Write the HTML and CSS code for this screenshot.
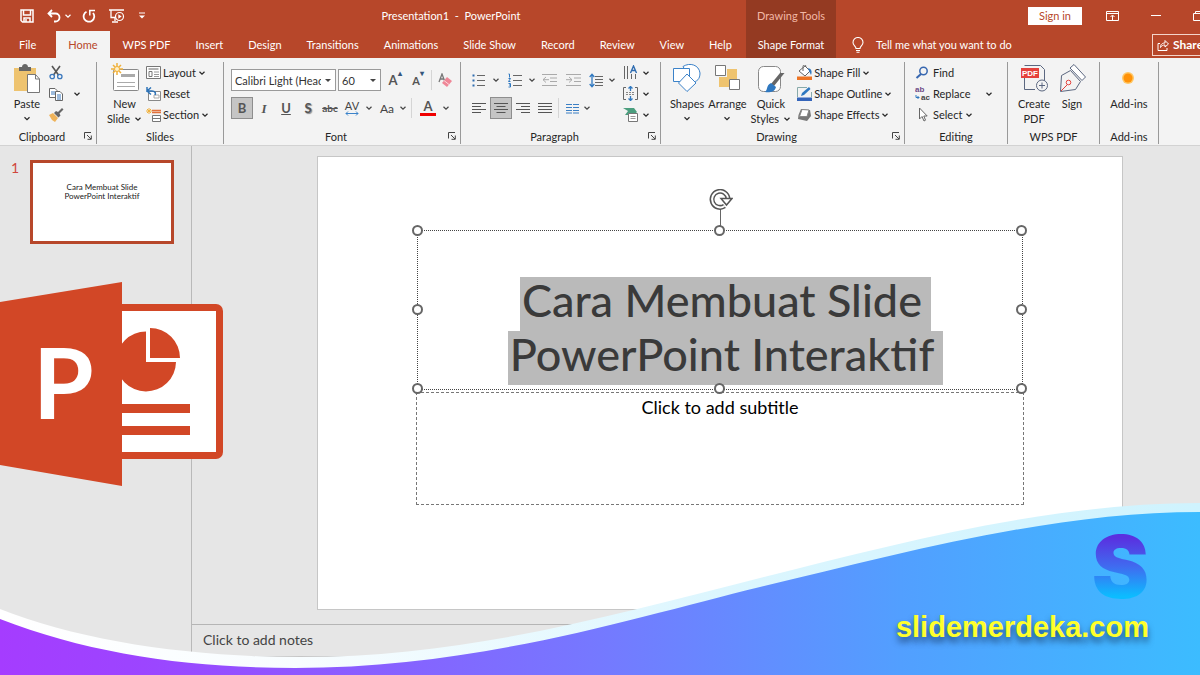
FILE: index.html
```
<!DOCTYPE html>
<html lang="en">
<head>
<meta charset="utf-8">
<title>Presentation1 - PowerPoint</title>
<link rel="stylesheet" href="styles.css">
</head>
<body>
<svg class="defs" aria-hidden="true">
  <symbol id="chev" viewBox="0 0 8 8"><path d="M1.500 2.800 4 5.200 6.500 2.800" fill="none" stroke="currentColor" stroke-width="1.200"/></symbol>
  <symbol id="launch" viewBox="0 0 8 8"><path d="M.5 6.500V.5H7M3 3l4 4M7.300 3.500v3.800H3.500" fill="none" stroke="#444"/></symbol>
</svg>
<div class="app">
  <header class="header">
    <div class="titlebar">
      <div class="qat">
        <button class="bare" aria-label="Save"><svg width="14" height="14" viewBox="0 0 14 14"><path d="M1 1h12v12H2.500L1 11.500zM3.500 1v5h7V1M4 13V9h6v4M6 10v3" fill="none" stroke="#fff" stroke-width="1.500"/></svg></button>
        <button class="bare" aria-label="Undo"><svg width="14" height="14" viewBox="0 0 14 14"><path d="M5 1 1.500 4.500 5 8M2 4.500h6.500a4 4 0 0 1 0 8H7" fill="none" stroke="#fff" stroke-width="1.800"/></svg></button>
        <button class="bare near" aria-label="Undo list"><svg width="8" height="8"><use href="#chev"/></svg></button>
        <button class="bare" aria-label="Repeat"><svg width="14" height="14" viewBox="0 0 14 14"><path d="M4.500 2.700A5.300 5.300 0 1 0 11 4" fill="none" stroke="#fff" stroke-width="1.800"/><path d="M7.800 6.500V1.500H13" fill="none" stroke="#fff" stroke-width="1.500"/></svg></button>
        <button class="bare" aria-label="Start slide show"><svg width="16" height="14" viewBox="0 0 16 14"><path d="M0 1h15M2 1v7.500h4M6 9v3M3 13h6" fill="none" stroke="#fff" stroke-width="1.300"/><circle cx="10.500" cy="7.500" r="4" fill="none" stroke="#fff" stroke-width="1.200"/><path d="M9.300 5.300v4.400l3.400-2.200z" fill="#fff"/></svg></button>
        <button class="bare" aria-label="Customize toolbar"><svg width="8" height="8" viewBox="0 0 8 8"><path d="M1 1h6" stroke="#fff"/><path d="M1 3.500h6L4 6.500z" fill="#fff"/></svg></button>
      </div>
      <h1 class="doc-title">Presentation1&nbsp; -&nbsp; PowerPoint</h1>
    </div>
    <div class="context context-name">Drawing Tools</div>
    <div class="window-tools">
      <button class="signin">Sign in</button>
      <button class="bare" aria-label="Ribbon display options"><svg width="13" height="10" viewBox="0 0 13 10"><path d="M.5.5h12v9H.5zM.5 2.500h12M6.500 9V4.500M4.500 6l2-2 2 2" fill="none" stroke="#fff"/></svg></button>
      <button class="bare" aria-label="Minimize"><svg width="10" height="10" viewBox="0 0 10 10"><path d="M0 4.500h10" stroke="#fff"/></svg></button>
      <button class="bare" aria-label="Restore"><svg width="11" height="10" viewBox="0 0 11 10"><path d="M.5 2.500h7v7h-7zM2.500 2.500v-2h8v7h-3" fill="none" stroke="#fff"/></svg></button>
    </div>
    <nav class="tabs">
      <button class="tab file">File</button><button class="tab active">Home</button><button class="tab">WPS PDF</button><button class="tab">Insert</button><button class="tab">Design</button><button class="tab">Transitions</button><button class="tab">Animations</button><button class="tab">Slide Show</button><button class="tab">Record</button><button class="tab">Review</button><button class="tab">View</button><button class="tab">Help</button>
    </nav>
    <button class="context context-tab">Shape Format</button>
    <div class="tell-row">
      <svg width="12" height="16" viewBox="0 0 12 16"><path d="M4 11.500C4 9 1 8.500 1 5.500a5 5 0 0 1 10 0c0 3-3 3.500-3 6zM4 13.500h4M4.500 15.300h3" fill="none" stroke="#fff" stroke-width="1.100"/></svg>
      <button class="bare tell">Tell me what you want to do</button>
      <button class="share"><svg width="12" height="12" viewBox="0 0 12 12"><path d="M3 4.500H1v7h9V9M3.500 8.500C3.500 5 5.500 4 8 4V1.500L11.500 5 8 8V6C6 6 4.500 6.500 3.500 8.500z" fill="none" stroke="#fff"/></svg>Share</button>
    </div>
  </header>

  <section class="ribbon" aria-label="Ribbon">
    <div class="group">
      <div class="body clipboard">
        <button class="big"><svg width="28" height="32" viewBox="0 0 28 32"><path d="M1 5h22v23H1z" fill="#eec36f"/><path d="M6 4h3c0-4 6-4 6 0h3v4H6z" fill="#666"/><path d="M14.500 11.500h8l4 4.500v13.500h-12z" fill="#fff" stroke="#777"/><path d="M22.500 11.500V16h4" fill="none" stroke="#777"/></svg><span>Paste</span><svg width="8" height="15" viewBox="0 0 8 8"><use href="#chev"/></svg></button>
        <div class="stack">
          <button class="row" aria-label="Cut"><svg width="14" height="15" viewBox="0 0 14 15"><path d="M3 1 9.500 10M11 1 4.500 10" stroke="#555" stroke-width="1.600"/><circle cx="3.200" cy="11.500" r="2.200" fill="none" stroke="#3b78bd" stroke-width="1.300"/><circle cx="10.800" cy="11.500" r="2.200" fill="none" stroke="#3b78bd" stroke-width="1.300"/></svg></button>
          <button class="row wide" aria-label="Copy"><svg width="14" height="14" viewBox="0 0 14 14"><path d="M.5 1.500H6l2 2v7H.5z" fill="#fff" stroke="#666"/><path d="M6.500 4.500H11l2.500 2.500v6.500h-7z" fill="#fff" stroke="#666"/><path d="M2 5h4M2 7h4M8 8h4M8 10h4M8 12h4" stroke="#3b78bd"/></svg><svg width="8" height="8"><use href="#chev"/></svg></button>
          <button class="row" aria-label="Format painter"><svg width="15" height="14" viewBox="0 0 15 14"><path d="m0 7 4-2 5 5-3 4-3-2z" fill="#efb35a"/><path d="m5 5 2-2 2 1 4-4 1.500 1.500-4 4 1 2-2 2z" fill="#666"/></svg></button>
        </div>
      </div>
      <div class="caption"><span>Clipboard</span><button class="bare" aria-label="Clipboard options"><svg width="8" height="8"><use href="#launch"/></svg></button></div>
    </div>

    <div class="group">
      <div class="body slides">
        <button class="big"><svg width="28" height="32" viewBox="0 0 28 32"><rect x="2.500" y="6.500" width="25" height="21" rx="1" fill="#fff" stroke="#888"/><path d="M10 12.500h14" stroke="#aaa" stroke-width="3"/><path d="M6 19.500h18M6 23.500h18" stroke="#aaa"/><path d="M6 0v12M0 6h12M2 2l8 8M10 2l-8 8" stroke="#f0b13c" stroke-width="1.500"/><circle cx="6" cy="6" r="2.500" fill="#fff0c8" stroke="#f0b13c"/></svg><span>New</span><span>Slide <svg width="8" height="8"><use href="#chev"/></svg></span></button>
        <div class="stack">
          <button class="row"><svg width="15" height="14" viewBox="0 0 15 14"><path d="M.5.5h14v12H.5z" fill="#fff" stroke="#777"/><path d="M2.500 3h10" stroke="#999" stroke-width="1.500"/><path d="M3 5.500h3v5H3z" fill="none" stroke="#777"/><path d="M8 6h5M8 8.500h5M8 10.500h5" stroke="#999"/></svg>Layout <svg width="8" height="8"><use href="#chev"/></svg></button>
          <button class="row"><svg width="15" height="14" viewBox="0 0 15 14"><path d="M2.500 4.500h12v9h-12z" fill="#fff" stroke="#888"/><path d="M8 8h5v3H8z" fill="none" stroke="#aaa"/><path d="M5 .5 1 4l4 3.500M1 4h5c3 0 4 2 3 4M1 0v5" fill="none" stroke="#2f74b8" stroke-width="1.500"/></svg>Reset</button>
          <button class="row"><svg width="15" height="14" viewBox="0 0 15 14"><path d="M6 2.500h9M6 4.500h9" stroke="#e2703a" stroke-width="1.300"/><path d="M6.500 7.500h8v6h-8zM6.500 10.500h8" fill="#fff" stroke="#777"/><path d="M3 0v6M0 3h6M1 1l4 4M5 1 1 5" stroke="#f0b13c"/></svg>Section <svg width="8" height="8"><use href="#chev"/></svg></button>
        </div>
      </div>
      <div class="caption"><span>Slides</span></div>
    </div>

    <div class="group">
      <div class="body lines font">
        <div class="line">
          <span class="pick pick-font"><select aria-label="Font"><option>Calibri Light (Headings)</option></select></span>
          <span class="pick pick-size"><select aria-label="Font size"><option>60</option></select></span>
          <button class="ib w24 glyph" aria-label="Increase font size">A<sup class="tri">▴</sup></button>
          <button class="ib w22 glyph small" aria-label="Decrease font size">A<sup class="tri">▾</sup></button>
          <i class="rule slim"></i>
          <button class="ib w22" aria-label="Clear formatting"><svg width="14" height="15" viewBox="0 0 14 15"><path d="M1 9 4 1l3 8M2 6h4" fill="none" stroke="#777" stroke-width="1.300"/><path d="m9 4 5 4-5 6-5-4z" fill="#ef8797"/><path d="m6 7.500 5 4" stroke="#fbd5da"/></svg></button>
        </div>
        <div class="line">
          <button class="ib w22 on glyph" aria-label="Bold">B</button>
          <button class="ib w22 glyph italic" aria-label="Italic">I</button>
          <button class="ib w22 glyph under" aria-label="Underline">U</button>
          <button class="ib w22 glyph shadow" aria-label="Shadow">S</button>
          <button class="ib w22 strike" aria-label="Strikethrough">abc</button>
          <button class="ib w22 spacing" aria-label="Character spacing">AV<svg width="14" height="5" viewBox="0 0 14 5"><path d="M1 2.500h12M3 .5l-2 2 2 2M11 .5l2 2-2 2" fill="none" stroke="#3b82c9"/></svg></button>
          <svg class="c" width="12" height="8" viewBox="0 0 8 8"><use href="#chev"/></svg>
          <button class="ib w24 case" aria-label="Change case">Aa</button>
          <svg class="c" width="8" height="8"><use href="#chev"/></svg>
          <i class="rule"></i>
          <button class="ib w24 glyph" aria-label="Font color"><span class="ink">A</span></button>
          <svg class="c" width="12" height="8" viewBox="0 0 8 8"><use href="#chev"/></svg>
        </div>
      </div>
      <div class="caption"><span>Font</span><button class="bare" aria-label="Font options"><svg width="8" height="8"><use href="#launch"/></svg></button></div>
    </div>

    <div class="group">
      <div class="body paragraph">
        <div class="lines">
          <div class="line">
            <button class="ib w22" aria-label="Bullets"><svg width="14" height="15" viewBox="0 0 14 15"><path d="M5 2.500h8M5 7.500h8M5 12.500h8" stroke="#666"/><path d="M.5 1.500h2v2h-2zM.5 6.500h2v2h-2zM.5 11.500h2v2h-2z" fill="#2f6cb0"/></svg></button>
            <svg class="c" width="12" height="8" viewBox="0 0 8 8"><use href="#chev"/></svg>
            <button class="ib w26" aria-label="Numbering"><svg width="14" height="15" viewBox="0 0 14 15"><path d="M5 2.500h9M5 7.500h9M5 12.500h9" stroke="#666"/><path d="M.5 1h1v3.500M.5 5.500h2l-2 3h2M.5 10.500h2v3.500H.5M1 12h1" fill="none" stroke="#2f78c0"/></svg></button>
            <svg class="c" width="8" height="8"><use href="#chev"/></svg>
            <button class="ib w26" aria-label="Decrease indent"><svg width="15" height="14" viewBox="0 0 15 14"><path d="M0 1.500h15M8 5h7M8 8.500h7M0 12.500h15M1 6.700h6M4 4 1 6.700 4 9.500" fill="none" stroke="#aaa"/></svg></button>
            <button class="ib w22" aria-label="Increase indent"><svg width="15" height="14" viewBox="0 0 15 14"><path d="M0 1.500h15M8 5h7M8 8.500h7M0 12.500h15M0 6.700h6M3 4l3 2.700L3 9.500" fill="none" stroke="#aaa"/></svg></button>
            <button class="ib w24" aria-label="Line spacing"><svg width="14" height="15" viewBox="0 0 14 15"><path d="M6 3.500h8M6 6.500h8M6 9.500h8M6 12.500h8" stroke="#666"/><path d="M3 1v13M.7 4 3 1.200 5.300 4M.7 11 3 13.800 5.300 11" fill="none" stroke="#2f78c0" stroke-width="1.300"/></svg></button>
            <svg class="c" width="8" height="8"><use href="#chev"/></svg>
          </div>
          <div class="line">
            <button class="ib w22" aria-label="Align left"><svg width="14" height="12" viewBox="0 0 14 12"><path d="M0 1.500h14M0 4.500h9M0 7.500h14M0 10.500h9" stroke="#555"/></svg></button>
            <button class="ib w22 on" aria-label="Center"><svg width="14" height="12" viewBox="0 0 14 12"><path d="M0 1.500h14M2.500 4.500h9M0 7.500h14M2.500 10.500h9" stroke="#555"/></svg></button>
            <button class="ib w22" aria-label="Align right"><svg width="14" height="12" viewBox="0 0 14 12"><path d="M0 1.500h14M5 4.500h9M0 7.500h14M5 10.500h9" stroke="#555"/></svg></button>
            <button class="ib w22" aria-label="Justify"><svg width="14" height="12" viewBox="0 0 14 12"><path d="M0 1.500h14M0 4.500h14M0 7.500h14M0 10.500h14" stroke="#555"/></svg></button>
            <i class="rule slim"></i>
            <button class="ib w22" aria-label="Columns"><svg width="13" height="11" viewBox="0 0 13 11"><path d="M0 1.500h6M7 1.500h6M0 4.500h6M7 4.500h6M0 7.500h6M7 7.500h6M0 10h6M7 10h6" stroke="#3b7fc4"/></svg></button>
            <svg class="c" width="8" height="8"><use href="#chev"/></svg>
          </div>
        </div>
        <div class="stack">
          <button class="row" aria-label="Text direction"><svg width="15" height="15" viewBox="0 0 15 15"><path d="M1.500 1v13M4.500 1v13M8.500 9v5M12.500 9v5" stroke="#666"/><path d="M7.500 8 10.500 1l3 7M8.500 5.500h4" fill="none" stroke="#2f6cb0" stroke-width="1.400"/></svg><svg width="8" height="8"><use href="#chev"/></svg></button>
          <button class="row" aria-label="Align text"><svg width="15" height="15" viewBox="0 0 15 15"><path d="M3 1.500H.5v12H3M12 1.500h2.500v12H12" fill="none" stroke="#666"/><path d="M3 6.500h9M3 8.500h9" stroke="#888" stroke-dasharray="2 1"/><path d="M7.500 0v5M5.500 2.500l2-2 2 2M7.500 10v5M5.500 12.500l2 2 2-2" fill="none" stroke="#2f78c0" stroke-width="1.300"/></svg><svg width="8" height="8"><use href="#chev"/></svg></button>
          <button class="row" aria-label="Convert to SmartArt"><svg width="15" height="15" viewBox="0 0 15 15"><path d="M0 1h11l3 4-3 3H2l3-4z" fill="#4b9e7e"/><path d="M5.500 6.500h9v8h-9z" fill="#fff" stroke="#777"/><path d="M7.500 9.500h5M7.500 11.500h5" stroke="#999"/></svg><svg width="8" height="8"><use href="#chev"/></svg></button>
        </div>
      </div>
      <div class="caption"><span>Paragraph</span><button class="bare" aria-label="Paragraph options"><svg width="8" height="8"><use href="#launch"/></svg></button></div>
    </div>

    <div class="group">
      <div class="body drawing">
        <button class="big"><svg width="28" height="32" viewBox="0 0 28 32"><g fill="#fff" stroke="#3b82c9"><path d="M10 3.500C17-1 26 2 27 10c0 6-3 9-8 9z"/><path d="M.5 5.500h16v13H.5z"/></g><path d="m14 11 9 9-9 8.500L5.500 20z" fill="#fff" stroke="#3b82c9"/></svg><span>Shapes</span><svg width="8" height="15" viewBox="0 0 8 8"><use href="#chev"/></svg></button>
        <button class="big"><svg width="28" height="32" viewBox="0 0 28 32"><path d="M14 6h10v10H14zM6 14h10v10H6z" fill="#eec36f"/><path d="M2.500 2.500h10v10h-10zM16.500 16.500h10v10h-10z" fill="#fff" stroke="#777"/></svg><span>Arrange</span><svg width="8" height="15" viewBox="0 0 8 8"><use href="#chev"/></svg></button>
        <button class="big"><svg width="28" height="32" viewBox="0 0 28 32"><rect x="1.500" y="3.500" width="22" height="25" rx="5" fill="#fff" stroke="#888"/><path d="M27.500 10 17 23l-3-2 9-11z" fill="#666"/><path d="m14 20 5 4c-1 5-7 6-11 5 3-2 1-7 6-9z" fill="#2f78c0"/></svg><span>Quick</span><span>Styles <svg width="8" height="8"><use href="#chev"/></svg></span></button>
        <div class="stack">
          <button class="row"><svg width="15" height="15" viewBox="0 0 15 15"><path d="m2 6 6-5 5 5-5 5z" fill="#fff" stroke="#666"/><path d="M6 6V1.500a1.500 1.500 0 0 1 3 0" fill="none" stroke="#666"/><path d="M11 3c4 1 4 4 3 7l-2-4z" fill="#2f78c0"/><path d="M0 11.500h15V15H0z" fill="#ed7424"/></svg>Shape Fill <svg width="8" height="8"><use href="#chev"/></svg></button>
          <button class="row"><svg width="15" height="15" viewBox="0 0 15 15"><path d="M10 1.500H.5V11M14.500 6v5" fill="none" stroke="#8aa"/><path d="m4 10 1-3 7-6 1.500 2L7 9z" fill="#2f78c0"/><path d="M0 11.500h15V15H0z" fill="#3565ba"/></svg>Shape Outline <svg width="8" height="8"><use href="#chev"/></svg></button>
          <button class="row"><svg width="15" height="15" viewBox="0 0 15 15"><path d="m4 2 9 1 1 6-4 5-9-2 .5-4z" fill="#777"/><path d="m5 2.500 7 .5-2 6.500H2.500z" fill="#fff" stroke="#888"/></svg>Shape Effects <svg width="8" height="8"><use href="#chev"/></svg></button>
        </div>
      </div>
      <div class="caption"><span>Drawing</span><button class="bare" aria-label="Drawing options"><svg width="8" height="8"><use href="#launch"/></svg></button></div>
    </div>

    <div class="group">
      <div class="body editing">
        <div class="stack">
          <button class="row"><svg width="15" height="14" viewBox="0 0 15 14"><circle cx="8.500" cy="5" r="3.700" fill="none" stroke="#3767b0" stroke-width="1.500"/><path d="M6 8 1.500 12" stroke="#3767b0" stroke-width="2"/></svg>Find</button>
          <button class="row wide"><svg width="15" height="15" viewBox="0 0 15 15"><text x="0" y="6" class="ab">ab</text><text x="6" y="14" class="ac">ac</text><path d="M1 9v2.500h3M2.500 10l1.500 1.500L2.500 13" fill="none" stroke="#2f78c0"/></svg>Replace<svg class="end" width="8" height="8"><use href="#chev"/></svg></button>
          <button class="row"><svg width="15" height="15" viewBox="0 0 15 15"><path d="M4.500 1v11l2.500-2.500L9 14l1.500-.8L8.800 9h3.400z" fill="#fff" stroke="#666"/></svg>Select <svg width="8" height="8"><use href="#chev"/></svg></button>
        </div>
      </div>
      <div class="caption"><span>Editing</span></div>
    </div>

    <div class="group">
      <div class="body wps">
        <button class="big"><svg width="28" height="32" viewBox="0 0 28 32"><path d="M4.500 2.500h16l4 4V18M4.500 14v12.500H15" fill="none" stroke="#5b6780"/><path d="M1 5h18v10H1z" fill="#e5413c"/><text x="2" y="13" class="pdf">PDF</text><circle cx="22" cy="22.500" r="5.500" fill="#f3f3f3" stroke="#5b6780"/><path d="M19 22.500h6M22 19.500v6" stroke="#5b6780"/></svg><span>Create</span><span>PDF</span></button>
        <button class="big"><svg width="28" height="32" viewBox="0 0 28 32"><path d="m2.500 28.500 1-16 9-5 10 11-5 8z" fill="none" stroke="#5b6780"/><path d="m12 5 4-3.500L27.500 14 24 17.500z" fill="#fff" stroke="#5b6780"/><path d="m3 28 6-6" stroke="#e5413c"/><circle cx="10.500" cy="19.500" r="2.300" fill="none" stroke="#e5413c"/></svg><span>Sign</span></button>
      </div>
      <div class="caption"><span>WPS PDF</span></div>
    </div>

    <div class="group">
      <div class="body addins">
        <button class="big"><svg width="28" height="32" viewBox="0 0 28 32"><circle cx="13" cy="15" r="6" fill="#ffc766"/><circle cx="13" cy="15" r="4.500" fill="#ff9208"/></svg><span>Add-ins</span></button>
      </div>
      <div class="caption"><span>Add-ins</span></div>
    </div>
  </section>

  <main class="workspace">
    <aside class="thumbs">
      <span class="num">1</span>
      <div class="thumb">Cara Membuat Slide<br>PowerPoint Interaktif</div>
    </aside>
    <div class="editor">
      <div class="stage">
        <article class="slide">
          <div class="title-box">
            <h2><span>Cara Membuat Slide</span><br><span>PowerPoint Interaktif</span></h2>
            <div class="stem"></div>
            <svg class="rotate" width="24" height="22" viewBox="0 0 24 22"><path d="M15.500 17A8 8 0 1 1 19 9.500" fill="none" stroke="#555" stroke-width="5"/><path d="M15.500 17A8 8 0 1 1 19 9.500" fill="none" stroke="#fff" stroke-width="2"/><path d="M12 9.500h11L17.500 16z" fill="#fff" stroke="#555" stroke-width="1.500"/></svg>
            <i class="h tl"></i><i class="h tc"></i><i class="h tr"></i><i class="h ml"></i><i class="h mr"></i><i class="h bl"></i><i class="h bc"></i><i class="h br"></i>
          </div>
          <div class="subtitle-box">Click to add subtitle</div>
        </article>
      </div>
      <div class="notes">Click to add notes</div>
      <div class="status"></div>
    </div>
  </main>

  <svg class="wave" viewBox="0 0 1200 175" preserveAspectRatio="none" aria-hidden="true">
    <defs>
      <linearGradient id="sea"><stop offset="0" stop-color="#a53cff"/><stop offset=".12" stop-color="#9c45ff"/><stop offset=".5" stop-color="#7579ff"/><stop offset=".75" stop-color="#529fff"/><stop offset="1" stop-color="#3cbcff"/></linearGradient>
      <linearGradient id="foam"><stop offset="0" stop-color="#fff"/><stop offset=".25" stop-color="#f8fdff"/><stop offset=".6" stop-color="#dcf6fe"/><stop offset="1" stop-color="#cff3fe"/></linearGradient>
    </defs>
    <path fill="url(#foam)" d="M0 108C80 140 190 156 300 156 470 156 620 112 760 77 900 42 1050 2 1200 2V175H0z"/>
    <path fill="url(#sea)" d="M0 118C90 153 190 167 295 167 480 167 640 115 760 86 900 53 1050 11 1200 11V175H0z"/>
  </svg>
  <svg class="ppt" width="223" height="204" viewBox="0 0 223 204" role="img" aria-label="PowerPoint">
    <rect x="100" y="22" width="123" height="155" rx="7" fill="#d24726"/>
    <path d="M122 29h94v141h-94z" fill="#fff"/>
    <path d="M146 49.500V80h30a30 30 0 1 1-30-30.500zM150 46a30 30 0 0 1 30 30h-30zM122 122h68v9h-68zM122 144h68v9h-68z" fill="#d24726"/>
    <path d="M0 20 122 0v204L0 183z" fill="#d24726"/>
    <text x="33" y="137" class="p">P</text>
  </svg>
  <div class="brand"><span class="mark">S</span><a href="#" class="site">slidemerdeka.com</a></div>
</div>
</body>
</html>
```
FILE: styles.css
```
* { box-sizing: border-box; }
body { margin: 0; font: 11px/15px Lato, "Open Sans", sans-serif; color: #262626; }
button { font: inherit; color: inherit; border: 0; padding: 0; background: none; white-space: nowrap; }
svg { display: block; flex: none; }
.defs { position: absolute; width: 0; height: 0; }
.app { position: relative; display: flex; flex-direction: column; min-height: 100vh; overflow: hidden; background: #e6e6e6; }

.header { display: grid; grid-template-columns: 746px 90px 1fr; grid-template-rows: 31px 27px; background: #b7472a; color: #fff; }
.titlebar { display: flex; align-items: center; }
.qat { display: flex; align-items: center; gap: 13px; width: 156px; padding-left: 20px; }
.bare { display: flex; align-items: center; }
.near { margin-left: -10px; margin-right: -3px; }
.doc-title { flex: 1; margin: 0; font-size: 11px; font-weight: 400; text-align: center; }
.context { display: flex; align-items: center; justify-content: center; background: #943a22; }
.context-name { color: #f2b7a5; }
.window-tools { display: flex; align-items: center; justify-content: flex-end; gap: 32px; margin-right: -4px; }
.signin { width: 54px; height: 18px; margin-right: -8px; background: #fff; color: #b7472a; }
.tabs { display: flex; gap: 1px; padding-left: 7px; }
.tab { padding: 0 12px; }
.file { margin-right: 7px; }
.active { background: #f3f3f3; color: #b7472a; }
.tell-row { display: flex; align-items: center; gap: 12px; padding-left: 16px; }
.share { display: flex; align-items: center; gap: 4px; height: 22px; width: 56px; margin: 0 -8px 0 auto; padding-left: 4px; border: 1px solid #f4d4ca; font-size: 12px; font-weight: 700; }

.ribbon { display: grid; grid-template-columns: 97px 127px 237px 200px 244px 103px 92px 59px; height: 88px; background: #f3f3f3; border-bottom: 1px solid #d2d2d2; }
.group { display: flex; flex-direction: column; margin: 4px 0; border-right: 1px solid #999; }
.body { display: flex; height: 66px; }
.caption { display: flex; align-items: center; height: 16px; }
.caption span { flex: 1; text-align: center; }
.caption .bare { width: 12px; }
.big { display: flex; flex-direction: column; align-items: center; justify-content: flex-start; padding-top: 1px; }
.big > svg:first-child { margin-bottom: 1px; }
.big span { display: flex; align-items: center; gap: 4px; }
.stack { display: grid; grid-template-rows: repeat(3, 21px); }
.row { display: flex; align-items: center; gap: 2px; }
.clipboard { padding-left: 13px; gap: 8px; }
.clipboard .row { gap: 10px; }
.slides { padding-left: 10px; gap: 4px; }
.editing { padding-left: 10px; }
.editing .row { gap: 3px; }
.editing .row.wide { width: 78px; }
.end { margin-left: auto; }
.wps { padding-left: 10px; gap: 8px; }
.addins { justify-content: center; }
.drawing { padding-left: 9px; gap: 4px; }
.drawing .stack { margin-left: 2px; }

.lines { display: flex; flex-direction: column; gap: 6px; padding-top: 7px; }
.line { display: flex; align-items: center; height: 22px; }
.font { padding-left: 7px; }
.paragraph { padding-left: 7px; }
.paragraph .stack { margin-left: auto; padding-right: 10px; }
.paragraph .stack .row { gap: 4px; }
.ib { display: flex; align-items: center; justify-content: center; height: 22px; }
.w22 { width: 22px; }
.w24 { width: 24px; }
.w26 { width: 26px; }
.on { background: #c5c5c5; border: 1px solid #8e8e8e; }
.rule { width: 1px; height: 20px; margin: 0 4px; background: #d5d5d5; }
.slim { margin: 0 2px; }
.c { color: #444; }
.glyph { font-size: 13px; font-weight: 700; color: #555; }
.small { font-size: 11px; }
.tri { font-size: 8px; line-height: 8px; color: #35567c; align-self: flex-start; }
.italic { font-family: "Liberation Serif", serif; font-style: italic; }
.under { text-decoration: underline; }
.shadow { text-shadow: 1px 1px 1px #888; }
.strike { font-size: 10px; font-weight: 700; color: #555; text-decoration: line-through; }
.spacing { flex-direction: column; font-size: 11px; line-height: 11px; color: #444; }
.case { font-size: 12px; color: #444; }
.ink { line-height: 13px; border-bottom: 3px solid #f00000; padding: 0 3px; }
.pick { position: relative; display: flex; height: 22px; margin-right: 2px; }
.pick select { width: 100%; padding: 0 14px 0 3px; appearance: none; border: 1px solid #9a9a9a; border-radius: 0; background: #fff; font: inherit; color: #333; }
.pick::after { content: ""; position: absolute; right: 5px; top: 10px; border: 3px solid transparent; border-top-color: #444; border-bottom: 0; }
.pick-font { width: 105px; }
.pick-size { width: 43px; }
.ab, .ac { font: 700 8px "Liberation Sans", sans-serif; fill: #444; }
.ab { fill: #6d4a86; }
.pdf { font: 700 8px "Liberation Sans", sans-serif; fill: #fff; }

.workspace { display: flex; flex: 1; }
.thumbs { display: flex; align-items: flex-start; gap: 12px; width: 192px; padding: 14px 0 0 11px; border-right: 1px solid #b9b9b9; }
.num { width: 7px; font-size: 14px; color: #d0463c; }
.thumb { width: 144px; height: 84px; padding-top: 20px; border: 3px solid #b7472a; background: #fff; color: #222; font-size: 8px; line-height: 9px; text-align: center; }
.editor { display: flex; flex-direction: column; flex: 1; }
.stage { flex: 1; padding: 10px 77px 14px 125px; }
.slide { aspect-ratio: 806 / 454; padding: 73px 98px 0; background: #fff; border: 1px solid #c6c6c6; }
.title-box { position: relative; display: flex; align-items: flex-end; justify-content: center; height: 160px; margin: 0 1px; padding: 0 0 4px 11px; border: 1px dotted #444; }
.title-box h2 { margin: 0; font-size: 45px; font-weight: 500; line-height: 46px; color: #3a3a3a; text-align: center; }
.title-box h2 span { display: inline-block; padding: 0 9px 8px 2px; background: #bababa; }
.h { position: absolute; width: 11px; height: 11px; margin: -6px; border: 2px solid #666; border-radius: 50%; background: #fff; }
.tl, .ml, .bl { left: 0; }
.tc, .bc { left: 50%; }
.tr, .mr, .br { left: 100%; }
.tl, .tc, .tr { top: 0; }
.ml, .mr { top: 50%; }
.bl, .bc, .br { top: 100%; }
.stem { position: absolute; left: 50%; bottom: 100%; width: 1px; height: 24px; background: #666; }
.rotate { position: absolute; left: 50%; bottom: 100%; margin: 0 0 20px -11px; }
.subtitle-box { height: 113px; margin-top: 2px; padding-top: 4px; border: 1px dashed #777; text-align: center; font-size: 18px; line-height: 20px; color: #000; }
.notes { height: 32px; padding: 7px 11px; border-top: 1px solid #b5b5b5; font-size: 14px; color: #444; }
.status { height: 20px; border-top: 1px solid #c6c6c6; }

.wave { position: absolute; left: 0; bottom: 0; width: 100%; height: 175px; }
.ppt { position: absolute; left: 0; top: 282px; }
.p { font: 700 98px Lato, "Open Sans", sans-serif; fill: #fff; }
.brand { position: absolute; right: 51px; bottom: 31px; display: flex; flex-direction: column; align-items: flex-end; }
.mark { font: 900 86px/84px Inter, sans-serif; background: linear-gradient(#5a30e0 15%, #3f6cf0 50%, #0cbcff 85%); background-clip: text; -webkit-background-clip: text; color: transparent; }
.site { font: 700 29px/36px "Liberation Sans", Arial, sans-serif; color: #ffff2b; text-decoration: none; text-shadow: 0 5px 6px rgba(20, 50, 90, .75); }
```
